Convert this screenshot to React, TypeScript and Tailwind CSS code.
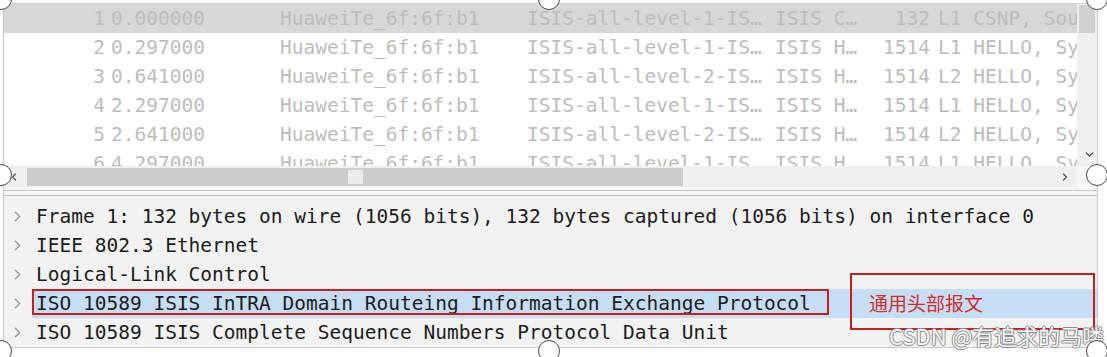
import { ChevronRight, ChevronLeft, ChevronDown } from "lucide-react";

const packets = [
  { no: 1, time: "0.000000", src: "HuaweiTe_6f:6f:b1", dst: "ISIS-all-level-1-IS…", proto: "ISIS C…", len: 132, info: "L1 CSNP, Sou" },
  { no: 2, time: "0.297000", src: "HuaweiTe_6f:6f:b1", dst: "ISIS-all-level-1-IS…", proto: "ISIS H…", len: 1514, info: "L1 HELLO, Sy" },
  { no: 3, time: "0.641000", src: "HuaweiTe_6f:6f:b1", dst: "ISIS-all-level-2-IS…", proto: "ISIS H…", len: 1514, info: "L2 HELLO, Sy" },
  { no: 4, time: "2.297000", src: "HuaweiTe_6f:6f:b1", dst: "ISIS-all-level-1-IS…", proto: "ISIS H…", len: 1514, info: "L1 HELLO, Sy" },
  { no: 5, time: "2.641000", src: "HuaweiTe_6f:6f:b1", dst: "ISIS-all-level-2-IS…", proto: "ISIS H…", len: 1514, info: "L2 HELLO, Sy" },
  { no: 6, time: "4.297000", src: "HuaweiTe_6f:6f:b1", dst: "ISIS-all-level-1-IS…", proto: "ISIS H…", len: 1514, info: "L1 HELLO, Sy" },
];

const details = [
  "Frame 1: 132 bytes on wire (1056 bits), 132 bytes captured (1056 bits) on interface 0",
  "IEEE 802.3 Ethernet",
  "Logical-Link Control",
  "ISO 10589 ISIS InTRA Domain Routeing Information Exchange Protocol",
  "ISO 10589 ISIS Complete Sequence Numbers Protocol Data Unit",
];

// resize handles of the pasted screenshot
const handles = [
  "left-[-10px] top-[-12px]",
  "left-[538px] top-[-12px]",
  "left-[1086px] top-[-12px]",
  "left-[-10px] top-[164px]",
  "left-[1086px] top-[164px]",
  "left-[-10px] top-[340px]",
  "left-[538px] top-[340px]",
  "left-[1086px] top-[340px]",
];

export default function App() {
  return (
    <div className="relative w-[1107px] h-[357px] bg-white overflow-hidden pt-[3px] pl-[3px] font-['DejaVu_Sans_Mono','Liberation_Mono',monospace] text-[19.5px]">
      <div className="w-[1095px] border-x border-[#c9c9c9]">
        {/* packet list */}
        <div className="flex h-[163px] border-t border-[#cfcfcf]">
          <div className="flex-1 overflow-hidden text-[#bdbdbd]">
            {packets.map((p) => (
              <div
                key={p.no}
                className={`flex h-[29px] leading-[29px] whitespace-nowrap ${p.no === 1 ? "bg-[#d7d7d7]" : ""}`}
              >
                <div className="w-[103px] shrink-0 text-right pr-[2px]">{p.no}</div>
                <div className="w-[169px] shrink-0 pl-[4px]">{p.time}</div>
                <div className="w-[247px] shrink-0 pl-[4px]">{p.src}</div>
                <div className="w-[248px] shrink-0 pl-[4px]">{p.dst}</div>
                <div className="w-[99px] shrink-0 pl-[4px]">{p.proto}</div>
                <div className="w-[62px] shrink-0 text-right pr-[2px]">{p.len}</div>
                <div className="flex-1 overflow-hidden pl-[6px]">{p.info}</div>
              </div>
            ))}
          </div>
          <div className="w-[20px] shrink-0 bg-[#f0f0f0] flex flex-col">
            <div className="h-[28px] mt-[1px] mx-[2px] bg-[#d0d0d0]" />
            <div className="flex-1" />
            <div className="h-[18px] flex items-center justify-center mb-[3px] pl-[4px]">
              <ChevronDown size={13} strokeWidth={2.5} className="text-[#555]" />
            </div>
          </div>
        </div>

        {/* horizontal scrollbar */}
        <div className="flex items-center h-[21px] bg-[#f0f0f0]">
          <div className="w-[20px] flex justify-center">
            <ChevronLeft size={12} strokeWidth={2.5} className="text-[#555]" />
          </div>
          <div className="relative w-[656px] h-[18px] ml-[3px] bg-[#cdcdcd]">
            <div className="absolute left-[321px] top-[2px] w-[15px] h-[14px] bg-[#ececec]" />
          </div>
          <div className="flex-1" />
          <div className="w-[20px] flex justify-center mr-[2px]">
            <ChevronRight size={12} strokeWidth={2.5} className="text-[#555]" />
          </div>
          <div className="w-[20px] h-full bg-[#f7f7f7]" />
        </div>

        {/* splitter */}
        <div className="flex flex-col h-[11px] bg-[#f7f7f7]">
          <div className="h-[3px]" />
          <div className="h-[1px] bg-[#c8c8c8]" />
          <div className="h-[4px]" />
          <div className="h-[1px] bg-[#bdbdbd]" />
        </div>

        {/* packet details */}
        <div className="bg-[#f2f2f2] pt-[4px] border-b border-[#c9c9c9] text-[#1c1c1c]">
          {details.map((d, i) => (
            <div key={d} className="flex h-[29px] leading-[29px] whitespace-nowrap">
              <div className="w-[28px] shrink-0 flex items-center pl-[5px]">
                <ChevronRight size={17} strokeWidth={2} className="text-[#9a9a9a]" />
              </div>
              <div className={`flex-1 pl-[4px] ${i === 3 ? "bg-[#c6def4]" : ""}`}>{d}</div>
            </div>
          ))}
        </div>
      </div>

      {/* annotations */}
      <div className="absolute left-[32px] top-[289px] w-[797px] h-[26px] border-2 border-[#c81e1e]" />
      <div className="absolute left-[850px] top-[273px] w-[245px] h-[57px] border-2 border-[#c81e1e]" />
      <div className="absolute left-[869px] top-[291px] text-[19px] leading-[24px] text-[#d42a2a] font-['Noto_Sans_CJK_SC',sans-serif]">
        通用头部报文
      </div>

      <div className="absolute left-[889px] top-[321px] text-[22px] leading-[28px] text-[#f8f8f8] font-['Noto_Sans_CJK_SC',sans-serif] [text-shadow:1px_0_0_#8c8c8c,-1px_0_0_#8c8c8c,0_1px_0_#8c8c8c,0_-1px_0_#8c8c8c]">
        CSDN @有追求的马喽
      </div>

      {handles.map((h) => (
        <div key={h} className={`absolute ${h} w-[22px] h-[22px] rounded-full bg-white border-[1.5px] border-[#4a4a4a]`} />
      ))}
    </div>
  );
}
